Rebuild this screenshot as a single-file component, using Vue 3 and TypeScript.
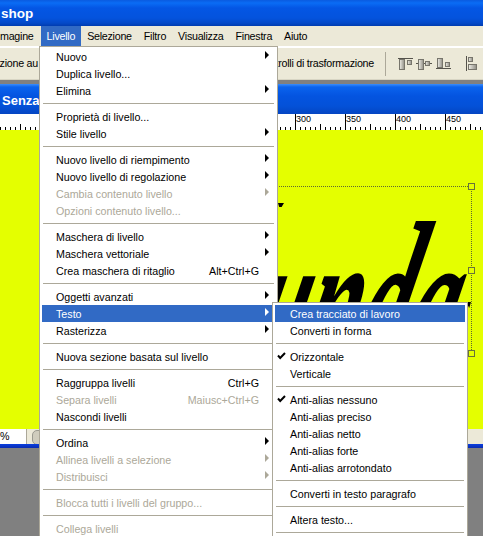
<script setup lang="ts">
import { computed } from 'vue';

type Row = { label?: string; off?: boolean; more?: boolean; keys?: string; check?: boolean; on?: boolean };

const sep: Row = {};

const layerMenu: Row[] = [
  { label: 'Nuovo', more: true },
  { label: 'Duplica livello...' },
  { label: 'Elimina', more: true },
  sep,
  { label: 'Proprietà di livello...' },
  { label: 'Stile livello', more: true },
  sep,
  { label: 'Nuovo livello di riempimento', more: true },
  { label: 'Nuovo livello di regolazione', more: true },
  { label: 'Cambia contenuto livello', off: true, more: true },
  { label: 'Opzioni contenuto livello...', off: true },
  sep,
  { label: 'Maschera di livello', more: true },
  { label: 'Maschera vettoriale', more: true },
  { label: 'Crea maschera di ritaglio', keys: 'Alt+Ctrl+G' },
  sep,
  { label: 'Oggetti avanzati', more: true },
  { label: 'Testo', more: true, on: true },
  { label: 'Rasterizza', more: true },
  sep,
  { label: 'Nuova sezione basata sul livello' },
  sep,
  { label: 'Raggruppa livelli', keys: 'Ctrl+G' },
  { label: 'Separa livelli', off: true, keys: 'Maiusc+Ctrl+G' },
  { label: 'Nascondi livelli' },
  sep,
  { label: 'Ordina', more: true },
  { label: 'Allinea livelli a selezione', off: true, more: true },
  { label: 'Distribuisci', off: true, more: true },
  sep,
  { label: 'Blocca tutti i livelli del gruppo...', off: true },
  sep,
  { label: 'Collega livelli', off: true },
];

const textMenu: Row[] = [
  { label: 'Crea tracciato di lavoro', on: true },
  { label: 'Converti in forma' },
  sep,
  { label: 'Orizzontale', check: true },
  { label: 'Verticale' },
  sep,
  { label: 'Anti-alias nessuno', check: true },
  { label: 'Anti-alias preciso' },
  { label: 'Anti-alias netto' },
  { label: 'Anti-alias forte' },
  { label: 'Anti-alias arrotondato' },
  sep,
  { label: 'Converti in testo paragrafo' },
  sep,
  { label: 'Altera testo...' },
  sep,
];

const menuBar = ['magine', 'Livello', 'Selezione', 'Filtro', 'Visualizza', 'Finestra', 'Aiuto'];

const ticks = computed(() => {
  const out: { x: number; h: number }[] = [];
  for (let x = 0; x < 483; x += 5) {
    const step = (x - 295 + 500) / 5;
    out.push({ x: x + 0.5, h: step % 10 === 0 ? 16 : step % 5 === 0 ? 6 : 3 });
  }
  return out;
});

const labels = [300, 350, 400, 450];
</script>

<template>
  <div class="app">
    <header class="title">shop</header>

    <nav class="menubar">
      <span v-for="m in menuBar" :key="m" class="top" :class="{ open: m === 'Livello' }">{{ m }}</span>
    </nav>

    <section class="options">
      <span class="opt-left">zione au</span>
      <span class="opt-right">Controlli di trasformazione</span>
      <i class="divider"></i>
      <svg class="aligns" width="86" height="16" viewBox="0 0 86 16">
        <defs>
          <linearGradient id="bar" x1="0" x2="1" y1="0" y2="0">
            <stop offset="0" stop-color="#f0efe8" />
            <stop offset="1" stop-color="#8e8c84" />
          </linearGradient>
        </defs>
        <g stroke="#77756c" fill="url(#bar)">
          <path d="M1 2.5h15" stroke="#55534c" fill="none" />
          <rect x="2.5" y="3.5" width="5" height="10" />
          <rect x="10.5" y="4.5" width="4" height="4" />
          <path d="M19 7.5h16" stroke="#55534c" fill="none" />
          <rect x="21.5" y="3.5" width="5" height="10" />
          <rect x="28.5" y="5.5" width="4" height="4" />
          <path d="M39 12.5h15" stroke="#55534c" fill="none" />
          <rect x="40.5" y="2.5" width="5" height="9" />
          <rect x="48.5" y="6.5" width="4" height="4" />
          <path d="M69.5 0v15" stroke="#55534c" fill="none" />
          <rect x="71.5" y="1.5" width="4" height="4" />
          <rect x="71.5" y="8.5" width="8" height="5" />
        </g>
      </svg>
    </section>

    <div class="strip"></div>

    <header class="doc-title">Senza</header>

    <div class="ruler">
      <svg width="483" height="16" viewBox="0 0 483 16">
        <line v-for="t in ticks" :key="t.x" :x1="t.x" :x2="t.x" :y1="16 - t.h" y2="16" stroke="#000" />
      </svg>
      <span v-for="(n, i) in labels" :key="n" class="ruler-label" :style="{ left: 296 + i * 50 + 'px' }">{{ n }}</span>
    </div>

    <main class="canvas">
      <span class="art">unda</span>
      <i class="chip chip-a"></i>
      <i class="chip chip-b"></i>
      <div class="selection">
        <i class="handle h1"></i>
        <i class="handle h2"></i>
        <i class="handle h3"></i>
      </div>
    </main>

    <footer class="status">
      <span class="zoomval">%</span>
      <span class="statusbtn"></span>
    </footer>
    <div class="doc-edge"></div>
    <div class="desk"></div>

    <ul class="menu layer">
      <template v-for="(r, i) in layerMenu" :key="i">
        <li v-if="!r.label" class="sep"></li>
        <li v-else class="row" :class="{ off: r.off, on: r.on }">
          <span class="label">{{ r.label }}</span>
          <span v-if="r.keys" class="keys">{{ r.keys }}</span>
          <i v-if="r.more" class="arrow"></i>
        </li>
      </template>
    </ul>

    <ul class="menu text">
      <template v-for="(r, i) in textMenu" :key="i">
        <li v-if="!r.label" class="sep"></li>
        <li v-else class="row" :class="{ on: r.on }">
          <svg v-if="r.check" class="check" width="9" height="8" viewBox="0 0 9 8">
            <path d="M1 3.5 3.2 6 8 1" fill="none" stroke="#000" stroke-width="2" />
          </svg>
          <span class="label">{{ r.label }}</span>
        </li>
      </template>
    </ul>
  </div>
</template>

<style>
html,
body {
  margin: 0;
  overflow: hidden;
}
</style>

<style scoped>
.app {
  position: relative;
  display: flex;
  flex-direction: column;
  width: 483px;
  height: 536px;
  overflow: hidden;
  font-family: "Liberation Sans", Arial, sans-serif;
  font-size: 10.7px;
  color: #000;
}

.title {
  height: 26px;
  flex: none;
  box-sizing: border-box;
  padding: 4px 0 0 1px;
  color: #fff;
  font: bold 13.5px "Liberation Sans", sans-serif;
  line-height: 19px;
  background: linear-gradient(#0a5be0 0, #0a6cf5 3px, #0456e4 8px, #0453dd 18px, #0449c8 23px, #003cb0 26px);
}

.menubar {
  height: 20px;
  flex: none;
  display: flex;
  background: #ece9d8;
  letter-spacing: -0.25px;
  line-height: 20px;
}

.top {
  padding: 0 6px;
}

.top:first-child {
  margin-left: -6px;
  padding-right: 7px;
}

.top.open {
  background: #316ac5;
  color: #fff;
}

.options {
  height: 34px;
  flex: none;
  box-sizing: border-box;
  display: flex;
  align-items: center;
  border-top: 2px solid #fff;
  border-bottom: 1px solid #d8d5c4;
  background: #ece9d8;
  letter-spacing: -0.25px;
}

.opt-left {
  width: 38px;
  overflow: hidden;
  flex: none;
  padding-bottom: 1px;
  white-space: nowrap;
  direction: rtl;
}

.opt-right {
  margin-left: auto;
  padding-bottom: 1px;
  white-space: nowrap;
}

.divider {
  width: 1px;
  height: 24px;
  margin: 0 11px;
  background: #aca899;
}

.aligns {
  flex: none;
}

.strip {
  height: 4px;
  flex: none;
  background: #808080;
}

.doc-title {
  height: 30px;
  flex: none;
  box-sizing: border-box;
  padding: 7px 0 0 2px;
  color: #fff;
  font: bold 13px "Liberation Sans", sans-serif;
  line-height: 19px;
  background: linear-gradient(#3b8dfa 0, #0a63ee 3px, #0454e0 12px, #0451d8 22px, #0445c2 30px);
}

.ruler {
  position: relative;
  height: 16px;
  flex: none;
  background: #fff;
}

.ruler svg {
  display: block;
}

.ruler-label {
  position: absolute;
  top: 0;
  font-size: 9px;
  line-height: 11px;
}

.canvas {
  position: relative;
  height: 299px;
  flex: none;
  overflow: hidden;
  background: #e4ff00;
}

.art {
  position: absolute;
  left: 226px;
  top: 58px;
  color: #000;
  font: italic bold 235px "Liberation Serif", serif;
  line-height: 235px;
  white-space: nowrap;
  transform-origin: 0 100%;
  transform: scaleX(0.41) skewX(-33deg);
}

.chip {
  position: absolute;
  background: #000;
}

.chip-a {
  left: 278px;
  top: 73px;
  width: 6px;
  height: 4px;
  clip-path: polygon(0 0, 100% 0, 60% 100%, 20% 100%);
}

.chip-b {
  left: 468px;
  top: 172px;
  width: 3px;
  height: 6px;
  clip-path: polygon(0 0, 100% 0, 40% 100%, 0 60%);
}

.selection {
  position: absolute;
  left: 250px;
  top: 56px;
  width: 221px;
  height: 167px;
  border-top: 1px dotted #5d6b30;
  border-right: 1px dotted #5d6b30;
}

.handle {
  position: absolute;
  right: -4px;
  width: 5px;
  height: 5px;
  border: 1px solid #68733a;
  background: #e4ff00;
}

.h1 { top: -4px; }
.h2 { top: 80px; }
.h3 { top: 163px; }

.status {
  height: 15px;
  flex: none;
  display: flex;
  background: #ece9d8;
}

.zoomval {
  width: 27px;
  height: 15px;
  background: #fff;
  line-height: 15px;
  border-right: 1px solid #aca899;
  box-sizing: border-box;
}

.statusbtn {
  width: 12px;
  height: 13px;
  margin: 1px 0 0 5px;
  border-radius: 5px;
  border: 1px solid #9a9a90;
  background: #cfccbd;
}

.doc-edge {
  height: 4px;
  flex: none;
  background: linear-gradient(#0a3fe0, #0a2cb0);
}

.desk {
  flex: 1;
  background: #808080;
}

.menu {
  position: absolute;
  margin: 0;
  padding: 2px;
  list-style: none;
  box-sizing: border-box;
  background: #fff;
  border: 1px solid #aca899;
}

.layer {
  left: 39px;
  top: 46px;
  width: 239px;
  height: 500px;
  padding-top: 1px;
}

.text {
  left: 272px;
  top: 302px;
  width: 196px;
  height: 250px;
}

.row {
  position: relative;
  display: flex;
  align-items: center;
  height: 17px;
  box-sizing: border-box;
  padding-left: 14px;
  white-space: nowrap;
}

.text .row {
  padding-left: 15px;
}

.row.on {
  background: #316ac5;
  color: #fff;
}

.row.off {
  color: #aca899;
}

.keys {
  position: absolute;
  right: 16px;
}

.arrow {
  position: absolute;
  right: 6px;
  top: 3px;
  border-left: 4px solid #000;
  border-top: 4px solid transparent;
  border-bottom: 4px solid transparent;
}

.row.on .arrow {
  border-left-color: #fff;
}

.row.off .arrow {
  border-left-color: #aca899;
}

.check {
  position: absolute;
  left: 2px;
  top: 4px;
}

.sep {
  height: 1px;
  margin: 4px 1px;
  background: #aca899;
}
</style>
